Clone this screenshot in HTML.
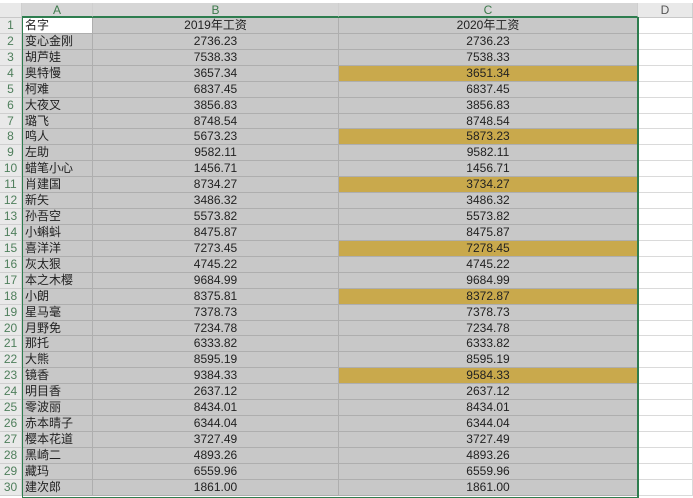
<!DOCTYPE html>
<html><head><meta charset="utf-8"><style>
body{margin:0;width:693px;height:497px;overflow:hidden;background:#fff;font-family:"Liberation Sans","Noto Sans CJK SC",sans-serif;}
.hdr{position:absolute;top:3px;left:0;width:693px;height:15px;background:#e9e9e9;border-bottom:1px solid #c8c8c8;box-sizing:border-box;font-size:12px;color:#555;}
.hdr div{position:absolute;top:0;height:14px;line-height:14px;text-align:center;border-right:1px solid #cfcfcf;box-sizing:border-box}
.hdr .sel{background:#d6d6d6;color:#3d7a4c;border-bottom:1px solid #2e7d4f}
.grid{position:absolute;top:18px;left:0;display:grid;grid-template-columns:22px 71px 246px 299px 55px;grid-template-rows:repeat(30,15.93px);font-size:12px;color:#222}
.grid div{box-sizing:border-box;border-bottom:1px solid #aeaeae;border-right:1px solid #aeaeae;background:#c8c8c8;line-height:15px;white-space:nowrap;overflow:hidden}
.grid .n{background:#e9e9e9;color:#4f7f5c;text-align:center;border-color:#cfcfcf;font-size:12px}
.grid .a{padding-left:3px}
.grid .c{text-align:center}
.grid .d{background:#fff;border-color:#dadada}
.grid .y{background:#c9a94c}
.grid .w{background:#fff}
.selb{position:absolute;left:22px;top:17px;width:617px;height:481px;border:1px solid #2e7d4f;box-sizing:border-box;border-right-width:2px;pointer-events:none}
</style></head><body>
<div class="hdr">
<div style="left:0;width:22px"></div>
<div class="sel" style="left:22px;width:71px">A</div>
<div class="sel" style="left:93px;width:246px">B</div>
<div class="sel" style="left:339px;width:299px">C</div>
<div style="left:638px;width:55px">D</div>
</div>
<div class="grid">
<div class="n">1</div><div class="a w">名字</div><div class="c">2019年工资</div><div class="c">2020年工资</div><div class="d"></div>
<div class="n">2</div><div class="a">变心金刚</div><div class="c">2736.23</div><div class="c">2736.23</div><div class="d"></div>
<div class="n">3</div><div class="a">胡芦娃</div><div class="c">7538.33</div><div class="c">7538.33</div><div class="d"></div>
<div class="n">4</div><div class="a">奥特慢</div><div class="c">3657.34</div><div class="c y">3651.34</div><div class="d"></div>
<div class="n">5</div><div class="a">柯难</div><div class="c">6837.45</div><div class="c">6837.45</div><div class="d"></div>
<div class="n">6</div><div class="a">大夜叉</div><div class="c">3856.83</div><div class="c">3856.83</div><div class="d"></div>
<div class="n">7</div><div class="a">璐飞</div><div class="c">8748.54</div><div class="c">8748.54</div><div class="d"></div>
<div class="n">8</div><div class="a">鸣人</div><div class="c">5673.23</div><div class="c y">5873.23</div><div class="d"></div>
<div class="n">9</div><div class="a">左助</div><div class="c">9582.11</div><div class="c">9582.11</div><div class="d"></div>
<div class="n">10</div><div class="a">蜡笔小心</div><div class="c">1456.71</div><div class="c">1456.71</div><div class="d"></div>
<div class="n">11</div><div class="a">肖建国</div><div class="c">8734.27</div><div class="c y">3734.27</div><div class="d"></div>
<div class="n">12</div><div class="a">新矢</div><div class="c">3486.32</div><div class="c">3486.32</div><div class="d"></div>
<div class="n">13</div><div class="a">孙吾空</div><div class="c">5573.82</div><div class="c">5573.82</div><div class="d"></div>
<div class="n">14</div><div class="a">小蝌蚪</div><div class="c">8475.87</div><div class="c">8475.87</div><div class="d"></div>
<div class="n">15</div><div class="a">喜洋洋</div><div class="c">7273.45</div><div class="c y">7278.45</div><div class="d"></div>
<div class="n">16</div><div class="a">灰太狠</div><div class="c">4745.22</div><div class="c">4745.22</div><div class="d"></div>
<div class="n">17</div><div class="a">本之木樱</div><div class="c">9684.99</div><div class="c">9684.99</div><div class="d"></div>
<div class="n">18</div><div class="a">小朗</div><div class="c">8375.81</div><div class="c y">8372.87</div><div class="d"></div>
<div class="n">19</div><div class="a">星马毫</div><div class="c">7378.73</div><div class="c">7378.73</div><div class="d"></div>
<div class="n">20</div><div class="a">月野免</div><div class="c">7234.78</div><div class="c">7234.78</div><div class="d"></div>
<div class="n">21</div><div class="a">那托</div><div class="c">6333.82</div><div class="c">6333.82</div><div class="d"></div>
<div class="n">22</div><div class="a">大熊</div><div class="c">8595.19</div><div class="c">8595.19</div><div class="d"></div>
<div class="n">23</div><div class="a">镜香</div><div class="c">9384.33</div><div class="c y">9584.33</div><div class="d"></div>
<div class="n">24</div><div class="a">明目香</div><div class="c">2637.12</div><div class="c">2637.12</div><div class="d"></div>
<div class="n">25</div><div class="a">零波丽</div><div class="c">8434.01</div><div class="c">8434.01</div><div class="d"></div>
<div class="n">26</div><div class="a">赤本晴子</div><div class="c">6344.04</div><div class="c">6344.04</div><div class="d"></div>
<div class="n">27</div><div class="a">樱本花道</div><div class="c">3727.49</div><div class="c">3727.49</div><div class="d"></div>
<div class="n">28</div><div class="a">黑崎二</div><div class="c">4893.26</div><div class="c">4893.26</div><div class="d"></div>
<div class="n">29</div><div class="a">藏玛</div><div class="c">6559.96</div><div class="c">6559.96</div><div class="d"></div>
<div class="n">30</div><div class="a">建次郎</div><div class="c">1861.00</div><div class="c">1861.00</div><div class="d"></div>
</div>
<div class="selb"></div>
</body></html>
